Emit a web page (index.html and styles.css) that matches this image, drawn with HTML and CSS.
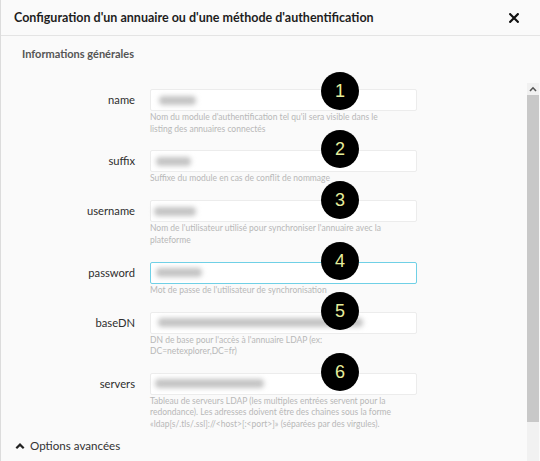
FILE: index.html
```html
<!DOCTYPE html>
<html lang="fr">
<head>
<meta charset="utf-8">
<title>Configuration</title>
<link rel="stylesheet" href="styles.css">
</head>
<body>
<div class="modal">
  <header class="head">
    <h1 class="title">Configuration d'un annuaire ou d'une méthode d'authentification</h1>
    <svg class="close" width="10" height="10" viewBox="0 0 10 10"><path d="M1.2 1.2 L8.8 8.8 M8.8 1.2 L1.2 8.8" stroke="#111" stroke-width="2.2" stroke-linecap="square"/></svg>
  </header>
  <div class="section-title">Informations générales</div>
  <div class="scroll">
    <div class="content">
      <div class="row">
        <label class="label">name</label>
        <div class="field">
          <div class="input"><span class="blob b-name"></span></div>
          <div class="help">Nom du module d'authentification tel qu'il sera visible dans le listing des annuaires connectés</div>
        </div>
      </div>
      <div class="row">
        <label class="label">suffix</label>
        <div class="field">
          <div class="input"><span class="blob b-suffix"></span></div>
          <div class="help">Suffixe du module en cas de conflit de nommage</div>
        </div>
      </div>
      <div class="row">
        <label class="label">username</label>
        <div class="field">
          <div class="input"><span class="blob b-user"></span></div>
          <div class="help">Nom de l'utilisateur utilisé pour synchroniser l'annuaire avec la plateforme</div>
        </div>
      </div>
      <div class="row">
        <label class="label">password</label>
        <div class="field">
          <div class="input focus"><span class="blob b-pass"></span></div>
          <div class="help">Mot de passe de l'utilisateur de synchronisation</div>
        </div>
      </div>
      <div class="row">
        <label class="label">baseDN</label>
        <div class="field">
          <div class="input"><span class="blob b-base"></span></div>
          <div class="help">DN de base pour l'accès à l'annuaire LDAP (ex: DC=netexplorer,DC=fr)</div>
        </div>
      </div>
      <div class="row last">
        <label class="label">servers</label>
        <div class="field">
          <div class="input"><span class="blob b-serv"></span></div>
          <div class="help">Tableau de serveurs LDAP (les multiples entrées servent pour la redondance). Les adresses doivent être des chaines sous la forme «ldap[s/.tls/.ssl]://&lt;host&gt;[:&lt;port&gt;]» (séparées par des virgules).</div>
        </div>
      </div>
      <div class="options">
        <svg class="caret" width="10" height="8" viewBox="0 0 10 8"><path d="M1.3 6.3 L5 2.6 L8.7 6.3" fill="none" stroke="#222" stroke-width="2.2"/></svg>
        <span>Options avancées</span>
      </div>
    </div>
    <div class="scrollbar">
      <div class="sb-arrow"><svg width="8" height="6" viewBox="0 0 8 6"><path d="M1 5 L4 1.8 L7 5" fill="none" stroke="#555" stroke-width="1.6"/></svg></div>
      <div class="sb-thumb"></div>
      <div class="sb-track"></div>
    </div>
  </div>
  <div class="badge n1">1</div>
  <div class="badge n2">2</div>
  <div class="badge n3">3</div>
  <div class="badge n4">4</div>
  <div class="badge n5">5</div>
  <div class="badge n6">6</div>
</div>
</body>
</html>
```
FILE: styles.css
```css
* { box-sizing: border-box; }
html, body { margin: 0; padding: 0; }
body {
  width: 540px;
  height: 461px;
  overflow: hidden;
  background: #fafafa;
  font-family: Lato, "Open Sans", "Liberation Sans", sans-serif;
}
.modal {
  position: relative;
  width: 540px;
  height: 461px;
  border-left: 1px solid #dcdcdc;
  background: #fafafa;
  display: flex;
  flex-direction: column;
}
.head {
  height: 36px;
  flex: none;
  display: flex;
  align-items: center;
  justify-content: space-between;
  padding: 0 21px 0 13px;
  border-bottom: 1px solid #e4e4e4;
  background: #fafafa;
}
.title {
  margin: 0;
  font-size: 12.5px;
  font-weight: 700;
  color: #1e1e1e;
}
.close { display: block; }
.section-title {
  flex: none;
  height: 47px;
  padding: 11px 0 0 21px;
  font-size: 11px;
  font-weight: 700;
  color: #555;
}
.scroll {
  flex: 1;
  display: flex;
  min-height: 0;
  overflow: hidden;
}
.content {
  flex: 1;
  padding-top: 6px;
}
.row {
  display: flex;
  gap: 15px;
  margin-bottom: 15.4px;
}
.row.last { margin-bottom: 0; }
.label {
  width: 134px;
  flex: none;
  text-align: right;
  font-size: 11.2px;
  line-height: 22px;
  color: #2e2e2e;
}
.field { width: 267px; }
.input {
  height: 22px;
  background: #fff;
  border: 1px solid #ececec;
  border-radius: 2px;
  display: flex;
  align-items: center;
}
.input.focus { border: 1.5px solid #6fd0e6; }
.blob {
  display: block;
  height: 9px;
  background: #c4c4c4;
  filter: blur(2.5px);
  border-radius: 4px;
}
.b-name { margin-left: 8px; width: 37px; }
.b-suffix { margin-left: 5px; width: 35px; }
.b-user { margin-left: 3px; width: 42px; }
.b-pass { margin-left: 5px; width: 46px; }
.b-base { margin-left: 7px; width: 205px; }
.b-serv { margin-left: 4px; width: 109px; }
.help {
  margin-top: 1px;
  width: 246px;
  font-size: 8.5px;
  line-height: 11.5px;
  color: #b8b8b8;
}
.options {
  display: flex;
  align-items: center;
  gap: 5px;
  padding: 9px 0 0 14px;
  font-size: 11.6px;
  color: #333;
}
.caret { display: block; }
.scrollbar {
  width: 12px;
  flex: none;
  display: flex;
  flex-direction: column;
  margin-right: 1px;
}
.sb-arrow {
  height: 12px;
  background: #f1f1f1;
  display: flex;
  align-items: center;
  justify-content: center;
}
.sb-thumb {
  height: 327px;
  background: #c8c8c8;
}
.sb-track {
  flex: 1;
  background: #f1f1f1;
}
.badge {
  position: absolute;
  left: 320px;
  width: 38px;
  height: 38px;
  border-radius: 50%;
  background: #000;
  color: #e6ee9c;
  font-family: "Liberation Sans", Arial, sans-serif;
  font-size: 18px;
  display: flex;
  align-items: center;
  justify-content: center;
}
.n1 { top: 72px; }
.n2 { top: 130px; }
.n3 { top: 181px; }
.n4 { top: 242px; }
.n5 { top: 292px; }
.n6 { top: 353px; }
```
